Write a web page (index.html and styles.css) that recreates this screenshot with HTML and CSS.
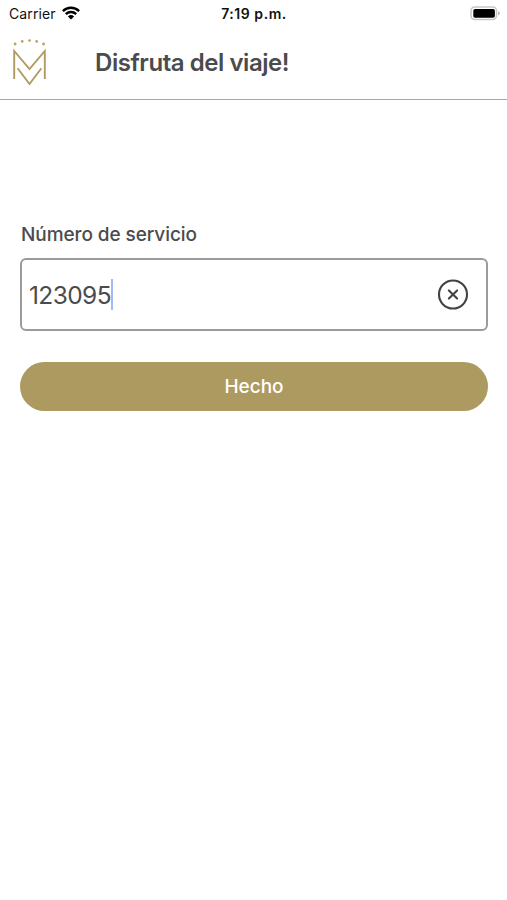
FILE: index.html
```html
<!DOCTYPE html>
<html lang="es">
<head>
<meta charset="utf-8">
<title>Disfruta del viaje!</title>
<link rel="stylesheet" href="styles.css">
</head>
<body>
<div class="status">
  <div class="status-left">
    <span class="carrier">Carrier</span>
    <svg class="wifi" width="18" height="14" viewBox="0 0 18 14">
      <path d="M.9 5.1a11.6 11.6 0 0 1 16.2 0M3.8 8.1a7.5 7.5 0 0 1 10.4 0" fill="none" stroke="#000" stroke-width="2.4"/>
      <path d="M9 13.6 5.9 10.5a4.5 4.5 0 0 1 6.2 0z"/>
    </svg>
  </div>
  <span class="time">7:19 p.m.</span>
  <svg class="battery" width="31" height="15" viewBox="0 0 31 15">
    <rect x="1" y="1" width="25.5" height="12.6" rx="3.8" fill="#fff" stroke="#c6c6c6" stroke-width="1.5"/>
    <rect x="3.3" y="3" width="21.6" height="8.7" rx="1.8"/>
    <path d="M28 5.3v4q1.8-.6 1.8-2t-1.8-2z" fill="#b5b5b5"/>
  </svg>
</div>
<header class="header">
  <svg class="logo" width="36" height="48" viewBox="12 38 36 48">
    <g fill="#b7a46d"><circle cx="15.1" cy="44" r="1.45"/><circle cx="22.2" cy="41.4" r="1.35"/><circle cx="29.5" cy="40.5" r="1.35"/><circle cx="36.7" cy="41.4" r="1.35"/><circle cx="43.6" cy="44" r="1.45"/></g>
    <path d="M14.2 79V51L29.5 69 44.8 51V79M17.6 68.3 29.5 84 41.4 68.3" fill="none" stroke="#b09c62" stroke-width="1.9"/>
  </svg>
  <h1 class="title">Disfruta del viaje!</h1>
</header>
<main class="form">
  <label class="label"><span>Número de servicio</span></label>
  <div class="field">
    <span class="value">123095</span><span class="caret"></span>
    <svg class="clear" width="32" height="32" viewBox="0 0 32 32" fill="none" stroke="#424244" stroke-width="2.1" stroke-linecap="round">
      <circle cx="16" cy="15.5" r="14"/>
      <path d="m11.9 11.4 8.2 8.2m0-8.2-8.2 8.2"/>
    </svg>
  </div>
  <button class="submit" type="button">Hecho</button>
</main>
</body>
</html>
```
FILE: styles.css
```css
* { box-sizing: border-box; }
body {
  margin: 0;
  min-height: 900px;
  background: #fff;
  color: #4b4b4d;
  font-family: Inter, "Liberation Sans", sans-serif;
}
.status {
  display: grid;
  grid-template-columns: 1fr auto 1fr;
  align-items: center;
  height: 27px;
  padding: 0 6px 0 9px;
  color: #111;
}
.status-left { display: flex; align-items: center; gap: 6px; }
.carrier { font-size: 14px; letter-spacing: 0.1px; }
.wifi { margin-top: -2px; }
.time { margin-left: -2px; font-size: 14px; font-weight: 600; letter-spacing: 0.55px; }
.battery { justify-self: end; }
.header {
  display: flex;
  align-items: center;
  gap: 48px;
  height: 73px;
  padding: 0 12px 3px;
  border-bottom: 1px solid #bea868;
}
.title {
  margin: 2px 0 0 -1px;
  font-size: 24px;
  line-height: 30px;
  font-weight: 600;
  letter-spacing: -0.45px;
}
.form { padding: 121px 19px 0 20px; }
.label {
  display: block;
  height: 37px;
  padding-left: 1px;
  font-size: 19px;
  line-height: 28px;
  font-weight: 500;
  letter-spacing: -0.08px;
}
.field {
  display: flex;
  align-items: center;
  height: 73px;
  padding: 0 17px 0 7px;
  border: 2.5px solid #9b9b9b;
  border-radius: 6px;
}
.value { padding-top: 1px; font-size: 24.5px; line-height: 30px; letter-spacing: -0.6px; }
.caret { width: 2px; height: 31px; background: #a6b9f5; }
.clear { margin-left: auto; }
.submit {
  display: block;
  width: 100%;
  height: 49px;
  margin-top: 31px;
  padding: 1px 0 0;
  border: 0;
  border-radius: 25px;
  background: #ad9a60;
  color: #fff;
  font: 500 19px/24px Inter, "Liberation Sans", sans-serif;
}
```
